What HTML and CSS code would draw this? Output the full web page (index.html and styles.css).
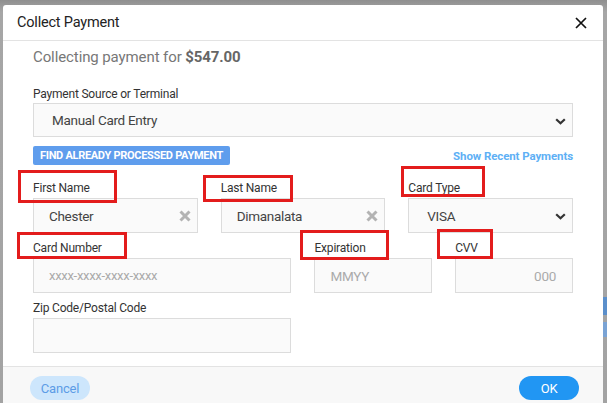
FILE: index.html
```html
<!DOCTYPE html>
<html>
<head>
<meta charset="utf-8">
<link rel="stylesheet" href="styles.css">
</head>
<body>
<div class="page">
  <div class="modal">
    <div class="modal-header">
      <span class="title">Collect Payment</span>
      <svg class="close" width="12" height="12" viewBox="0 0 12 12"><path d="M1 1L11 11M11 1L1 11" stroke="#111" stroke-width="1.7" fill="none"/></svg>
    </div>
    <div class="modal-body">
      <div class="amount">Collecting payment for <b>$547.00</b></div>
      <label class="label source-label">Payment Source or Terminal</label>
      <div class="control select">
        <span>Manual Card Entry</span>
        <svg class="chev" width="11" height="7" viewBox="0 0 11 7"><path d="M1.2 1.2L5.5 5.3L9.8 1.2" stroke="#333" stroke-width="2.2" fill="none"/></svg>
      </div>
      <div class="actions">
        <button class="find-btn">FIND ALREADY PROCESSED PAYMENT</button>
        <a class="recent">Show Recent Payments</a>
      </div>
      <div class="fields">
        <div class="field span4">
          <label class="label">First Name</label>
          <div class="control input"><span>Chester</span>
            <svg class="clear" width="12" height="12" viewBox="0 0 12 12"><path d="M1.5 1.5L10.5 10.5M10.5 1.5L1.5 10.5" stroke="#b3b3b3" stroke-width="3" fill="none"/></svg>
          </div>
        </div>
        <div class="field span4">
          <label class="label">Last Name</label>
          <div class="control input"><span>Dimanalata</span>
            <svg class="clear" width="12" height="12" viewBox="0 0 12 12"><path d="M1.5 1.5L10.5 10.5M10.5 1.5L1.5 10.5" stroke="#b3b3b3" stroke-width="3" fill="none"/></svg>
          </div>
        </div>
        <div class="field span4">
          <label class="label">Card Type</label>
          <div class="control select"><span>VISA</span>
            <svg class="chev" width="11" height="7" viewBox="0 0 11 7"><path d="M1.2 1.2L5.5 5.3L9.8 1.2" stroke="#333" stroke-width="2.2" fill="none"/></svg>
          </div>
        </div>
        <div class="field span6">
          <label class="label">Card Number</label>
          <div class="control input"><span class="ph small">xxxx-xxxx-xxxx-xxxx</span></div>
        </div>
        <div class="field span3">
          <label class="label">Expiration</label>
          <div class="control input"><span class="ph">MMYY</span></div>
        </div>
        <div class="field span3">
          <label class="label">CVV</label>
          <div class="control input right"><span class="ph">000</span></div>
        </div>
        <div class="field span6">
          <label class="label">Zip Code/Postal Code</label>
          <div class="control input"></div>
        </div>
      </div>
    </div>
    <div class="modal-footer">
      <button class="btn cancel">Cancel</button>
      <button class="btn ok">OK</button>
    </div>
  </div>
  <div class="mark m1"></div>
  <div class="mark m2"></div>
  <div class="mark m3"></div>
  <div class="mark m4"></div>
  <div class="mark m5"></div>
  <div class="mark m6"></div>
</div>
</body>
</html>
```

FILE: styles.css
```css
* { box-sizing: border-box; }
html, body { margin: 0; padding: 0; }
body {
  width: 607px;
  height: 403px;
  overflow: hidden;
  background: #a3a3a3;
  font-family: Roboto, "Liberation Sans", Arial, sans-serif;
}
.page {
  position: relative;
  width: 607px;
  height: 403px;
  overflow: hidden;
  padding: 5px 4px 0 3px;
  background:
    linear-gradient(to right, transparent 603px, #5b8fcb 603px) 0 297px / 607px 18px no-repeat,
    linear-gradient(to right, transparent 603px, #7aa3d4 603px) 0 322px / 607px 15px no-repeat,
    linear-gradient(#8f8f8f, #a6a6a6 12px, #a3a3a3);
}
.modal {
  background: #fff;
  border-radius: 3px 3px 0 0;
  height: 398px;
  display: flex;
  flex-direction: column;
}
.modal-header {
  height: 36px;
  flex: none;
  border-bottom: 1px solid #e3e3e3;
  display: flex;
  align-items: center;
  justify-content: space-between;
  padding: 0 16px 0 14px;
}
.title {
  font-size: 14.5px;
  color: #222;
  letter-spacing: -0.2px;
}
.close { margin-top: 1px; }
.modal-body {
  flex: none;
  padding: 6px 30px 13px 30px;
}
.amount {
  font-size: 15px;
  line-height: 20px;
  color: #777;
  letter-spacing: -0.1px;
}
.amount b { color: #666; font-weight: 700; }
.label {
  display: block;
  font-size: 12px;
  line-height: 14px;
  color: #333;
  margin-bottom: 3px;
  letter-spacing: -0.2px;
}
.source-label { margin-top: 20px; margin-bottom: 2px; }
.control {
  position: relative;
  height: 35px;
  border: 1px solid #dcdcdc;
  background: #fafafa;
  display: flex;
  align-items: center;
  font-size: 13.5px;
  letter-spacing: -0.3px;
  color: #444;
  padding: 0 16px 0 15px;
}
.select { padding-left: 18px; }
.modal-body > .select { height: 34px; }
.chev { position: absolute; right: 6px; top: 14px; }
.clear { position: absolute; right: 6px; top: 11px; }
.ph { color: #aaa; font-size: 13.5px; }
.ph.small { font-size: 13px; }
.right { justify-content: flex-end; }
.actions {
  display: flex;
  justify-content: space-between;
  align-items: center;
  margin-top: 9px;
}
.find-btn {
  height: 19px;
  width: 197px;
  border: none;
  border-radius: 2px;
  background: #5f9ded;
  color: #fff;
  font-family: Roboto, "Liberation Sans", Arial, sans-serif;
  font-weight: 700;
  font-size: 11px;
  letter-spacing: -0.3px;
  padding: 0;
}
.recent {
  font-size: 11.5px;
  font-weight: 700;
  color: #5eb0f5;
  letter-spacing: -0.1px;
}
.fields {
  margin-top: 16px;
  display: grid;
  grid-template-columns: repeat(12, 1fr);
  column-gap: 23px;
  row-gap: 8px;
}
.span4 { grid-column: span 4; }
.span6 { grid-column: span 6; }
.span3 { grid-column: span 3; }
.modal-footer {
  border-top: 1px solid #e3e3e3;
  background: #f8f8f8;
  flex: 1;
  display: flex;
  justify-content: space-between;
  align-items: flex-start;
  padding: 9px 24px 0 27px;
}
.btn {
  height: 24px;
  width: 60px;
  border: none;
  border-radius: 12px;
  font-family: Roboto, "Liberation Sans", Arial, sans-serif;
  font-size: 13px;
  letter-spacing: -0.2px;
  padding: 0;
}
.cancel { background: #cde6fc; color: #5c9ce6; }
.ok { background: #2196f3; color: #fff; }
.mark {
  position: absolute;
  border: 3px solid #e31c1c;
}
.m1 { left: 18px; top: 170px; width: 99px; height: 33px; }
.m2 { left: 203px; top: 175px; width: 90px; height: 27px; }
.m3 { left: 401px; top: 166px; width: 84px; height: 31px; }
.m4 { left: 17px; top: 232px; width: 110px; height: 27px; }
.m5 { left: 300px; top: 230px; width: 89px; height: 30px; }
.m6 { left: 437px; top: 229px; width: 56px; height: 30px; }
```
